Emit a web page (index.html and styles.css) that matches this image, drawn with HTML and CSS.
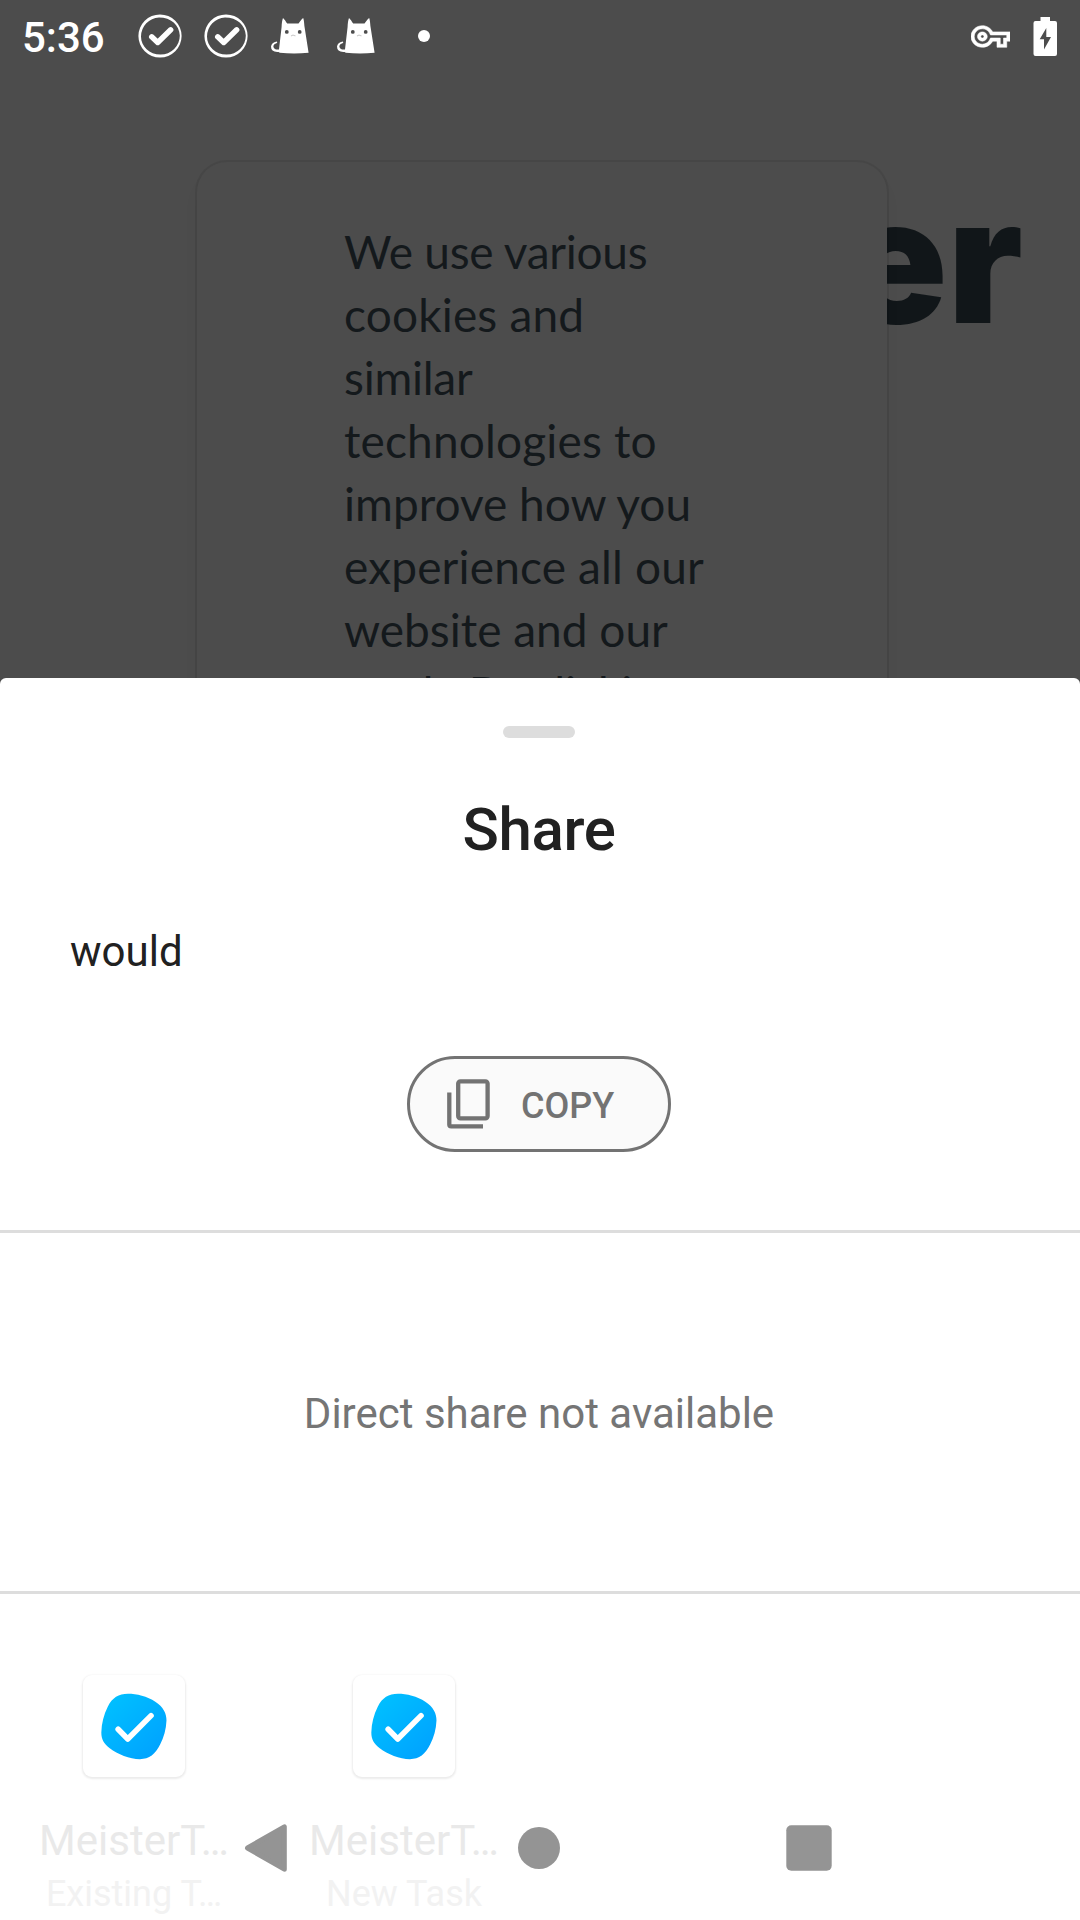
FILE: index.html
```html
<!DOCTYPE html>
<html lang="en">
<head>
<meta charset="utf-8">
<title>Share</title>
<link rel="stylesheet" href="styles.css">
</head>
<body>
<svg class="defs" width="0" height="0" aria-hidden="true">
  <defs>
    <linearGradient id="blue" x1="0" y1="0" x2="1" y2="1">
      <stop offset="0" stop-color="#00c3ff"/>
      <stop offset="1" stop-color="#009fff"/>
    </linearGradient>
    <symbol id="check-ring" viewBox="0 0 44 44">
      <path fill="#fff" fill-rule="evenodd" d="M22 .4A21.6 21.600 0 1 1 22 43.600 21.600 21.600 0 0 1 22 .4ZM21 3.400A18.900 19.400 0 0 0 3 22.500C3 32.500 11.500 40.600 22.500 40.600A19.200 19 0 0 0 41.800 21.500C41.300 11 33 3.400 21 3.400Z"/>
      <path fill="none" stroke="#fff" stroke-width="5.400" stroke-linecap="round" stroke-linejoin="round" d="M13.700 22.800 19.700 28.500 32.700 15.800"/>
    </symbol>
    <symbol id="cat" viewBox="0 0 38 36">
      <path fill="#fff" d="M12 0C13.500 1.200 15 3.800 16.200 5.600H27.500C29 3.500 30.500 1.200 32.200 0 33 2 33.200 5 33.400 8L37.600 34.800Q23 36 8.800 34.800L7.600 33.900Q0 34.500 0 28.500 .6 24.500 5.600 23.500 6.800 24 6 25 2 26 2.400 29 3.400 32 8 31.500L10.600 9C10.700 5 11.200 2 12 0Z"/>
      <circle cx="15.800" cy="13.900" r="1.900" fill="#4c4c4c"/>
      <circle cx="28.700" cy="13.900" r="1.900" fill="#4c4c4c"/>
      <path fill="none" stroke="#ccc" stroke-width="1.100" d="M20 18 22 17 24.500 18"/>
    </symbol>
    <symbol id="task-app" viewBox="0 0 103 103">
      <path fill="url(#blue)" d="M45.400 19C54 19 65 21.500 73 27 81 32 84.500 39 84.300 46 84 55 81.500 63 78 70 73 80 67 85 57.500 85 47 85 35 80 27 74 21 69 18.500 65 18.500 58 18.700 49 21 40 25 32 29.500 23 36 19 45.400 19Z"/>
      <path fill="none" stroke="#fff" stroke-width="5.600" stroke-linecap="round" stroke-linejoin="round" d="M35.500 54.800 45.200 64.600 68.700 41"/>
    </symbol>
  </defs>
</svg>

<main class="screen">
  <header class="status">
    <span class="time">5:36</span>
    <svg class="ring"><use href="#check-ring"/></svg>
    <svg class="ring"><use href="#check-ring"/></svg>
    <svg class="cat"><use href="#cat"/></svg>
    <svg class="cat"><use href="#cat"/></svg>
    <span class="dot"></span>
    <svg class="key" viewBox="0 0 24 24" preserveAspectRatio="none"><path fill="#fff" d="M22 19h-6v-4h-2.680c-1.140 2.420-3.600 4-6.320 4-3.860 0-7-3.140-7-7s3.140-7 7-7c2.720 0 5.170 1.580 6.320 4H24v6h-2v4zm-4-2h2v-4h2v-2H11.940l-.23-.67C11.010 8.340 9.110 7 7 7c-2.760 0-5 2.240-5 5s2.240 5 5 5c2.110 0 4.010-1.340 4.710-3.330l.23-.67H18v4zM7 15c-1.650 0-3-1.350-3-3s1.350-3 3-3 3 1.350 3 3-1.350 3-3 3zm0-4c-.55 0-1 .45-1 1s.45 1 1 1 1-.45 1-1-.45-1-1-1z" stroke="#fff" stroke-width=".35"/></svg>
    <svg class="battery" viewBox="0 0 24 39"><path fill="#fff" fill-rule="evenodd" d="M7.500 0h9.500v4h5A2 2 0 0 1 24 6v31a2 2 0 0 1-2 2h-19.500a2 2 0 0 1-2-2V6a2 2 0 0 1 2-2h5ZM13.300 11 6.700 22.200H11V32.500L18 20H13.300Z"/></svg>
  </header>

  <section class="page">
    <div class="brand">er</div>
    <article class="cookie">
      <p class="tight">We use various</p>
      <p class="loose">cookies and</p>
      <p class="tight">similar</p>
      <p class="loose">technologies to</p>
      <p>improve how you</p>
      <p class="loose">experience all our</p>
      <p>website and our</p>
      <p>work. By clicking</p>
    </article>
  </section>

  <section class="sheet">
    <div class="handle"></div>
    <h1 class="title">Share</h1>
    <p class="shared">would</p>
    <button class="copy" type="button">
      <svg class="copy-icon" viewBox="0 0 43 50" fill="none" stroke="#737373" stroke-width="4.300"><rect x="11.200" y="2.300" width="29.400" height="37" rx="2.200"/><path d="M2.300 13.500V45.500Q2.300 47.300 4.200 47.300H36"/></svg>
      <span>COPY</span>
    </button>
    <div class="direct">Direct share not available</div>
    <div class="apps">
      <div class="app">
        <svg class="app-icon"><use href="#task-app"/></svg>
        <span class="name">MeisterT…</span>
        <span class="sub">Existing T…</span>
      </div>
      <div class="app">
        <svg class="app-icon"><use href="#task-app"/></svg>
        <span class="name">MeisterT…</span>
        <span class="sub">New Task</span>
      </div>
    </div>
  </section>

  <nav class="nav">
    <svg width="43" height="48" viewBox="0 0 43 48"><path fill="#949494" stroke="#949494" stroke-width="5" stroke-linejoin="round" d="M40.300 2.800V45.200L3.500 24Z"/></svg>
    <svg class="home" width="42" height="42" viewBox="0 0 42 42"><circle cx="21" cy="21" r="21" fill="#949494"/></svg>
    <svg width="46" height="46" viewBox="0 0 46 46"><rect x=".3" y=".3" width="45.400" height="45.400" rx="5" fill="#949494"/></svg>
  </nav>
</main>
</body>
</html>
```
FILE: styles.css
```css
* { box-sizing: border-box; }

body {
  margin: 0;
  background: #fff;
  font-family: Roboto, "Liberation Sans", sans-serif;
}

p, h1 { margin: 0; }

.defs { display: block; }

.screen {
  position: relative;
  display: flex;
  flex-direction: column;
  width: 1080px;
  height: 1920px;
  overflow: hidden;
  background: #4c4c4c;
}

/* status bar */
.status {
  display: flex;
  align-items: center;
  flex: none;
  height: 72px;
  padding: 0 23px 0 22px;
  color: #fff;
}

.time {
  width: 116px;
  font-size: 42px;
  font-weight: 500;
  line-height: 50px;
  padding-top: 3px;
}

.ring {
  width: 44px;
  height: 44px;
  margin-right: 22px;
}

.cat {
  width: 38px;
  height: 36px;
  margin: 0 28px 0 0;
}

.ring + .cat { margin-left: 1px; }

.dot {
  width: 12px;
  height: 12px;
  margin-left: 15px;
  border-radius: 50%;
  background: #fff;
}

.key {
  width: 39px;
  height: 37px;
  margin: 1px 23px 0 auto;
}

.battery {
  width: 24px;
  height: 39px;
}

/* dimmed page behind the sheet */
.page {
  display: grid;
  flex: none;
  height: 606px;
  overflow: hidden;
  color: #14191c;
}

.brand, .cookie { grid-area: 1 / 1; }

.brand {
  justify-self: end;
  margin: 98px 57px 0 0;
  font-family: Inter, sans-serif;
  font-size: 174px;
  font-weight: 900;
  line-height: 180px;
  color: #111619;
}

.cookie {
  z-index: 1;
  width: 690px;
  height: 700px;
  margin: 90px 0 0 197px;
  padding: 58px 0 0 147px;
  border-radius: 30px;
  background: #4c4c4c;
  box-shadow: 0 0 0 2px rgba(0, 0, 0, .07), 0 14px 16px rgba(0, 0, 0, .04);
  font-family: Lato, "Open Sans", sans-serif;
  font-size: 46px;
  line-height: 63px;
  white-space: nowrap;
}

.tight { letter-spacing: -.27px; }
.loose { letter-spacing: .16px; }

/* share sheet */
.sheet {
  display: flex;
  flex-direction: column;
  align-items: center;
  flex: 1;
  border-radius: 6px 6px 0 0;
  background: #fff;
}

.handle {
  width: 72px;
  height: 12px;
  margin: 48px 2px 0 0;
  border-radius: 6px;
  background: #ddd;
}

.title {
  margin: 56px 2px 0 0;
  font-size: 60px;
  font-weight: 500;
  line-height: 72px;
  letter-spacing: -.4px;
  color: #212121;
}

.shared {
  align-self: stretch;
  margin-top: 61px;
  padding-left: 70px;
  font-size: 42px;
  line-height: 50px;
  color: #212121;
}

.copy {
  display: flex;
  align-items: center;
  width: 264px;
  height: 96px;
  margin: 79px 2px 0 0;
  padding: 0 0 0 37px;
  border: 3px solid #737373;
  border-radius: 48px;
  background: #fafafa;
  font: 500 36px/44px Roboto, "Liberation Sans", sans-serif;
  color: #737373;
}

.copy-icon {
  width: 43px;
  height: 50px;
  margin-right: 31px;
}

.copy span { padding-top: 3px; }

.direct {
  display: flex;
  align-items: center;
  justify-content: center;
  align-self: stretch;
  height: 364px;
  margin-top: 78px;
  padding: 3px 2px 0 0;
  border-top: 3px solid #ddd;
  border-bottom: 3px solid #ddd;
  font-size: 42px;
  line-height: 50px;
  color: #757575;
}

.apps {
  display: grid;
  grid-template-columns: repeat(4, 270px);
  align-self: stretch;
  padding-top: 81px;
}

.app {
  display: flex;
  flex-direction: column;
  align-items: center;
  padding-right: 2px;
}

.app-icon {
  width: 102px;
  height: 102px;
  border-radius: 9px;
  background: #fff;
  box-shadow: 0 1px 2px 1px rgba(0, 0, 0, .08);
}

.name {
  margin-top: 39px;
  font-size: 42px;
  line-height: 50px;
  color: #e9e9e9;
}

.sub {
  margin-top: 7px;
  font-size: 36px;
  line-height: 43px;
  color: #f2f2f2;
}

/* system navigation, drawn over the sheet */
.nav {
  position: absolute;
  left: 0;
  right: 0;
  bottom: 0;
  display: flex;
  align-items: center;
  justify-content: space-between;
  height: 144px;
  padding: 0 248px 0 244px;
}

.home { margin-left: 5px; }
```
